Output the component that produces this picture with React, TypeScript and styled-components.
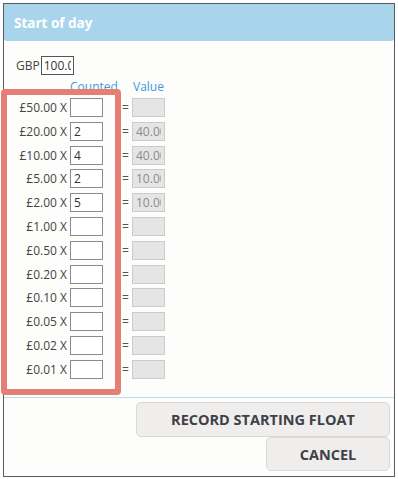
import styled, { createGlobalStyle } from "styled-components";

const GlobalStyle = createGlobalStyle`
  body {
    margin: 0;
    background: #ffffff;
    font-family: "Open Sans", "Liberation Sans", sans-serif;
  }
`;

const Page = styled.div`
  position: relative;
  width: 398px;
  height: 479px;
  padding: 3px;
  box-sizing: border-box;
`;

const Dialog = styled.div`
  width: 392px;
  height: 474px;
  border: 1px solid #5a5a5a;
  box-sizing: border-box;
  background: #fdfdfc;
  display: flex;
  flex-direction: column;
`;

const Header = styled.div`
  height: 37px;
  background: #a8d5eb;
  border-radius: 0 0 3px 3px;
  color: #ffffff;
  font-weight: 700;
  font-size: 13.5px;
  display: flex;
  align-items: center;
  padding-left: 10px;
`;

const Body = styled.div`
  padding: 15px 0 0 12px;
  display: flex;
  flex-direction: column;
`;

const CurrencyRow = styled.div`
  display: flex;
  align-items: center;
  font-size: 12px;
  color: #444;
  height: 19px;
`;

const CurrencyInput = styled.input`
  width: 33px;
  height: 19px;
  box-sizing: border-box;
  border: 1px solid #555;
  font: inherit;
  font-size: 12px;
  color: #333;
  padding: 0 2px;
  margin-left: 1px;
  background: #fff;
  outline: none;
`;

const Headings = styled.div`
  display: flex;
  height: 14px;
  margin-top: 5px;
  margin-left: 54px;
  font-size: 12px;
  line-height: 14px;
  color: #3d9ad8;
`;

const Heading = styled.div<{ $width: number }>`
  width: ${(p) => p.$width}px;
`;

const Rows = styled.div`
  display: flex;
  flex-direction: column;
  gap: 4.8px;
  margin-top: 4px;
`;

const Row = styled.div`
  display: flex;
  align-items: center;
  height: 19px;
  font-size: 12px;
  color: #444;
`;

const Denomination = styled.div`
  width: 51px;
  text-align: right;
  margin-right: 3px;
  white-space: nowrap;
`;

const CountInput = styled.input`
  width: 33px;
  height: 19px;
  box-sizing: border-box;
  border: 1px solid #8a8a8a;
  background: #fff;
  font: inherit;
  font-size: 12px;
  color: #333;
  padding: 0 3px;
  outline: none;
`;

const Equals = styled.div`
  width: 29px;
  padding-left: 19px;
  box-sizing: border-box;
  color: #555;
`;

const ValueBox = styled.input`
  width: 33px;
  height: 19px;
  box-sizing: border-box;
  border: 1px solid #cbcbcb;
  background: #e5e5e5;
  font: inherit;
  font-size: 12px;
  color: #8c8c8c;
  padding: 0 3px;
  outline: none;
`;

const Separator = styled.div`
  margin-top: auto;
  height: 1px;
  background: #b9dcee;
`;

const Actions = styled.div`
  display: flex;
  flex-direction: column;
  align-items: flex-end;
  padding: 4px 4px 5px 0;
`;

const Button = styled.button<{ $width: number; $height: number }>`
  width: ${(p) => p.$width}px;
  height: ${(p) => p.$height}px;
  background: #efeeed;
  border: 1px solid #d9d9d9;
  border-radius: 5px;
  font-family: "Open Sans", "Liberation Sans", sans-serif;
  font-weight: 700;
  font-size: 14.5px;
  color: #3e4148;
  cursor: pointer;
`;

const Highlight = styled.div`
  position: absolute;
  left: 1px;
  top: 89px;
  width: 120px;
  height: 306px;
  box-sizing: border-box;
  border: 6px solid #e57f75;
  border-radius: 4px;
  pointer-events: none;
`;

const denominations: { label: string; count: string; value: string }[] = [
  { label: "£50.00", count: "", value: "" },
  { label: "£20.00", count: "2", value: "40.00" },
  { label: "£10.00", count: "4", value: "40.00" },
  { label: "£5.00", count: "2", value: "10.00" },
  { label: "£2.00", count: "5", value: "10.00" },
  { label: "£1.00", count: "", value: "" },
  { label: "£0.50", count: "", value: "" },
  { label: "£0.20", count: "", value: "" },
  { label: "£0.10", count: "", value: "" },
  { label: "£0.05", count: "", value: "" },
  { label: "£0.02", count: "", value: "" },
  { label: "£0.01", count: "", value: "" },
];

const App = () => {
  return (
    <Page>
      <GlobalStyle />
      <Dialog>
        <Header>Start of day</Header>
        <Body>
          <CurrencyRow>
            GBP
            <CurrencyInput defaultValue="100.00" />
          </CurrencyRow>
          <Headings>
            <Heading $width={63}>Counted</Heading>
            <Heading $width={40}>Value</Heading>
          </Headings>
          <Rows>
            {denominations.map((d) => (
              <Row key={d.label}>
                <Denomination>{d.label} X</Denomination>
                <CountInput defaultValue={d.count} />
                <Equals>=</Equals>
                <ValueBox readOnly value={d.value} />
              </Row>
            ))}
          </Rows>
        </Body>
        <Separator />
        <Actions>
          <Button $width={254} $height={35}>
            RECORD STARTING FLOAT
          </Button>
          <Button $width={124} $height={34}>
            CANCEL
          </Button>
        </Actions>
      </Dialog>
      <Highlight />
    </Page>
  );
};

export default App;
